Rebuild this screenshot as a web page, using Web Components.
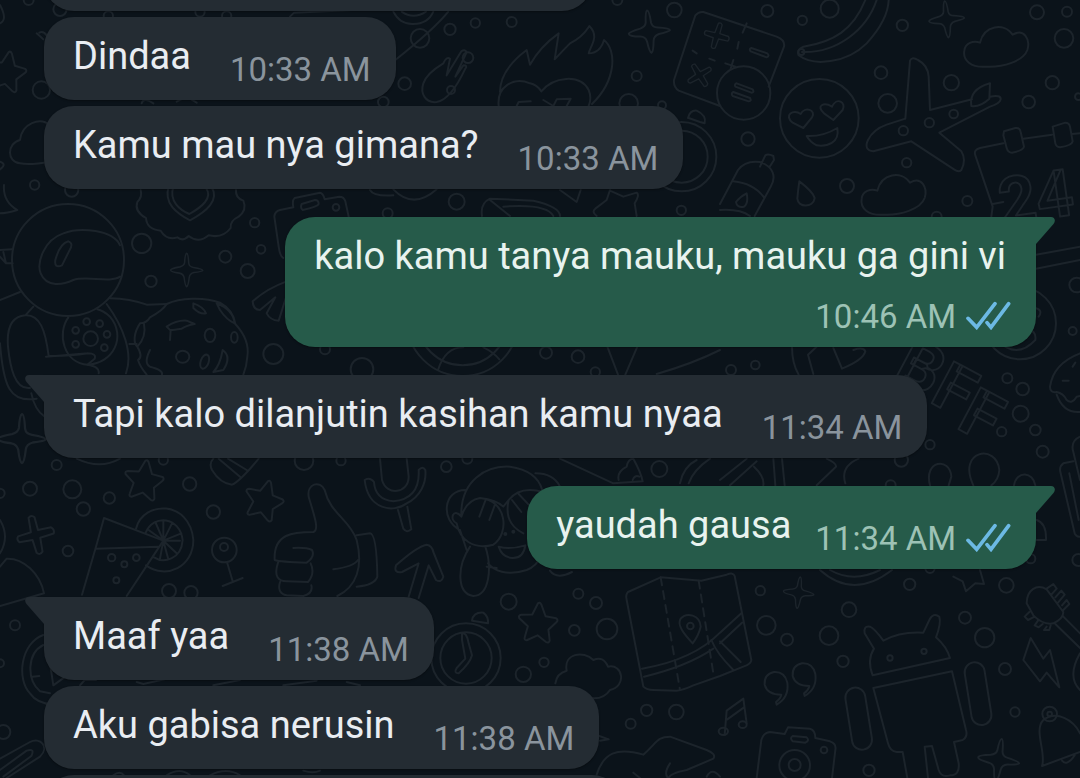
<!DOCTYPE html>
<html lang="id">
<head>
<meta charset="utf-8">
<meta name="viewport" content="width=device-width, initial-scale=1">
<title>Chat</title>
<style>
  html, body {
    margin: 0;
    height: 100%;
    overflow: hidden;
    background: #0b131a;
    font-family: Roboto, "Noto Sans", sans-serif;
  }
</style>
</head>
<body>

<chat-screen>
  <chat-wallpaper slot="wallpaper"></chat-wallpaper>
  <chat-bubble class="cut first"></chat-bubble>
  <chat-bubble time="10:33 AM">Dindaa</chat-bubble>
  <chat-bubble time="10:33 AM">Kamu mau nya gimana?</chat-bubble>
  <chat-bubble out tail stacked time="10:46 AM">kalo kamu tanya mauku, mauku ga gini vi</chat-bubble>
  <chat-bubble tail time="11:34 AM">Tapi kalo dilanjutin kasihan kamu nyaa</chat-bubble>
  <chat-bubble out tail time="11:34 AM">yaudah gausa</chat-bubble>
  <chat-bubble tail time="11:38 AM">Maaf yaa</chat-bubble>
  <chat-bubble time="11:38 AM">Aku gabisa nerusin</chat-bubble>
  <chat-bubble class="cut last"></chat-bubble>
</chat-screen>

<template id="screen-template">
  <style>
    :host {
      display: block;
      position: relative;
      height: 100vh;
      overflow: hidden;
    }
    main {
      position: relative;
      display: flex;
      flex-direction: column;
      gap: 6px;
      padding: 0 44px;
      /* scrolled so the oldest bubble is partly out of view */
      margin-top: -72px;
    }
    ::slotted(.cut) {
      min-height: 83px;
      flex-shrink: 0;
    }
    ::slotted(.first) { width: 548px; }
    ::slotted(.last) { width: 578px; }
  </style>
  <slot name="wallpaper"></slot>
  <main><slot></slot></main>
</template>

<template id="bubble-template">
  <style>
    :host {
      display: block;
      position: relative;
      box-sizing: border-box;
      align-self: flex-start;
      max-width: 100%;
      border-radius: 30px;
      background: var(--bubble);
      box-shadow: 0 1px 2px rgba(0, 0, 0, 0.35);
      --bubble: #242c33;
      --text: #e9edf2;
      --meta: #8a949d;
    }
    :host([out]) {
      align-self: flex-end;
      --bubble: #265b4a;
      --text: #e8f3ef;
      --meta: #9dc2b5;
    }
    :host([tail]) {
      margin-top: 22px;
      border-top-left-radius: 0;
    }
    :host([out][tail]) {
      border-top-left-radius: 30px;
      border-top-right-radius: 0;
    }
    .row {
      display: flex;
      align-items: flex-end;
      gap: 39px;
      padding: 16px 25px 10px 29px;
    }
    :host([out]) .row { gap: 24px; }
    :host([out][stacked]) .row {
      flex-direction: column;
      gap: 7px;
    }
    p {
      margin: 0 0 11px;
      color: var(--text);
      font-size: 38px;
      line-height: 46px;
    }
    :host([stacked]) p { padding-right: 5px; }
    .meta {
      display: flex;
      align-items: center;
      gap: 10px;
      color: var(--meta);
      font-size: 33px;
      line-height: 40px;
      white-space: nowrap;
    }
    .tail {
      position: absolute;
      top: 0;
      left: -19px;
      width: 20px;
      height: 28px;
      fill: var(--bubble);
      display: none;
    }
    :host([tail]) .tail { display: block; }
    :host([out]) .tail {
      left: auto;
      right: -19px;
      transform: scaleX(-1);
    }
    .ticks {
      display: none;
      width: 45px;
      height: 29px;
      margin-bottom: 4px;
      fill: none;
      stroke: #6cb9e4;
      stroke-width: 11;
      stroke-linecap: round;
      stroke-linejoin: miter;
    }
    :host([out]) .ticks { display: block; }
  </style>
  <svg class="tail" viewBox="0 0 20 28" aria-hidden="true"><path d="M20 0H4C0 0-1 4 1.500 7L19 27V28H20Z"/></svg>
  <div class="row">
    <p><slot></slot></p>
    <div class="meta">
      <time></time>
      <svg class="ticks" viewBox="740 3 135 87" aria-hidden="true">
        <path d="M746 55L772 82L827 11M803 68L815 82L868 11"/>
      </svg>
    </div>
  </div>
</template>

<template id="wallpaper-template">
  <style>
    :host {
      display: block;
      position: absolute;
      inset: 0;
    }
    svg {
      display: block;
      width: 100%;
      height: 100%;
      fill: none;
      stroke: #1c242b;
      stroke-width: 6;
      stroke-linecap: round;
      stroke-linejoin: round;
    }
    text {
      font-family: Roboto, sans-serif;
      font-weight: 700;
    }
  </style>
  <svg viewBox="0 0 3240 2334" preserveAspectRatio="xMinYMin slice" aria-hidden="true">
    <defs>
      <path id="star" d="M-2-58Q3-63 8-55L22-20L54-15Q62-10 55-3L32 20L37 53Q34 62 26 57L0 38L-32 54Q-41 54-38 44L-30 12L-57-12Q-60-20-51-22L-18-24Z"/>
      <path id="spark" d="M0-64Q6-64 8-26Q10-12 26-10Q62-4 62 2Q60 6 28 10Q12 14 10 28Q6 62 0 64Q-6 62-10 28Q-14 14-28 12Q-62 8-62 0Q-60-6-26-12Q-10-16-8-28Q-6-62 0-64Z"/>
      <path id="cloud" d="M-48-30C-36-82 24-92 50-54C84-74 104-40 94-8C82 26 20 44-28 42C-76 46-100 22-95-6C-93-28-68-38-48-30Z"/>
      <path id="plus" d="M-10-56Q0-64 8-54L10-14L50-14Q60-6 54 6L12 10L10 52Q0 62-8 52L-12 12L-52 10Q-60 0-52-8L-12-12Z"/>
    </defs>
    <g id="dots"></g>

    <!-- top left: star, cloud, heart badge, camera -->
    <use href="#star" transform="translate(20 214) rotate(8)"/>
    <path d="M0 15Q24 60 0 70M110 100L130 118M118 98Q130 92 140 106M0 485Q22 492 0 508"/>
    <path d="M150 376C120 350 66 370 60 420C20 430 20 486 60 490Q90 496 150 485"/>
    <path d="M12 555Q8 604 52 630Q20 640 0 640"/>
    <path d="M422 570Q428 590 412 606Q402 634 438 654Q440 688 482 692Q500 722 532 712Q548 726 566 708Q596 732 626 706Q668 716 692 684Q690 662 716 650Q742 630 730 602Q706 594 708 570"/>
    <path d="M506 560C490 610 530 640 570 661C620 634 660 600 634 560M520 560C506 604 540 630 568 642C604 622 640 594 618 564"/>
    <path d="M850 774Q840 770 836 740L823 650Q824 634 840 630L880 622Q876 600 884 594L960 578Q970 580 974 598L1018 590Q1032 590 1036 604L1046 650M905 612L945 600Q956 600 956 612Q954 620 908 630Q900 624 905 612Z"/>
    <path d="M870 50L882 38L1060 30M425 310Q430 290 460 310M530 305L560 290L590 308"/>

    <!-- astronaut with cookie -->
    <circle cx="204" cy="780" r="168"/>
    <path d="M360 736C340 690 240 680 190 700C130 720 110 790 122 820C140 864 190 854 220 840C260 826 330 850 360 830M166 780Q180 730 205 724Q222 730 208 752L186 796Q162 806 166 780Z"/>
    <path d="M0 750L36 748M0 770L18 790L38 790M10 756L18 790M0 900L60 876M100 920L76 946C30 950 20 990 24 1040C30 1100 44 1170 90 1164M76 946C120 944 136 990 146 1068Q200 1070 264 1060M0 1030C10 1160 30 1210 110 1196M138 1070L264 1060Q290 1060 284 1076L262 1094Q300 1100 296 1120M320 912C370 980 400 1060 378 1120M330 895Q390 896 440 914L500 912M94 1180Q104 1230 134 1250"/>
    <path d="M205 952C170 1000 190 1090 264 1094C340 1090 380 1010 330 950Q310 932 292 928"/>
    <circle cx="272" cy="1016" r="22"/>

    <!-- spotted ball -->
    <path d="M500 912C540 894 610 890 660 908Q700 930 706 972Q750 1020 742 1070Q740 1100 730 1124M500 912Q490 930 450 952Q440 970 420 970C400 1000 400 1030 412 1040Q430 1070 414 1080Q420 1100 440 1124M388 1032L410 1032M450 1050Q430 1090 450 1100Q490 1110 486 1124M580 910Q610 920 618 940Q600 944 580 924ZM650 910Q700 930 704 970Q680 960 660 930ZM500 980Q530 960 560 962L584 972Q560 976 545 986Q520 990 512 990L510 1020M500 980L512 992M668 1050Q696 1070 670 1110L640 1116Q660 1096 668 1050ZM412 1040Q440 1010 432 972"/>
    <ellipse cx="630" cy="1006" rx="16" ry="20"/><ellipse cx="703" cy="1012" rx="10" ry="16"/>
    <ellipse cx="548" cy="1070" rx="20" ry="18"/><ellipse cx="614" cy="1085" rx="12" ry="22" transform="rotate(20 614 1085)"/>
    <path d="M860 844Q800 866 758 904Q760 930 780 930L826 892L800 940Q810 960 836 962L862 880"/>
    <use href="#spark" transform="translate(560 810) scale(.78)"/>
    <use href="#spark" transform="translate(66 1316) scale(1.150)"/>

    <!-- flaming heart, glove, ring -->
    <path d="M1180 35Q1200 74 1240 72Q1284 72 1300 35M1205 35Q1240 60 1278 35M1345 35Q1300 90 1186 180"/>
    <path d="M1270 250C1260 280 1276 310 1310 306C1350 300 1380 240 1396 206Q1404 196 1390 196L1366 230L1400 156Q1394 146 1384 154L1340 226L1350 176Q1340 168 1330 190Q1280 220 1270 250Z"/>
    <path d="M1496 318C1490 260 1540 230 1590 250Q1610 254 1624 274C1660 230 1740 220 1766 270Q1776 294 1766 318M1500 276C1500 220 1540 180 1580 150L1590 194Q1620 140 1676 100L1664 178Q1690 150 1710 130C1750 110 1760 90 1768 78C1800 110 1770 140 1766 160Q1800 160 1812 120C1850 150 1850 240 1776 312M1550 318L1556 306L1592 304M1630 300L1660 318L1670 298L1712 296L1700 318"/>
    <use href="#spark" transform="translate(1948 95) rotate(-6)"/>

    <!-- calculator card -->
    <path d="M2110 36L2330 110Q2356 120 2352 140L2306 260M2110 36Q2096 34 2086 46L2022 240Q2020 262 2036 272L2160 318M2240 70L2228 98M2216 126L2212 146M2200 180L2192 206M2176 190L2206 200M2078 152L2090 160M2128 176L2144 182"/>
    <circle cx="2231" cy="279" r="80"/>
    <use href="#plus" transform="translate(2150 108) rotate(18) scale(.68)"/>
    <use href="#plus" transform="translate(2098 226) rotate(60) scale(.68)"/>
    <path d="M2254 144L2302 160Q2310 168 2300 172L2252 154Q2246 146 2254 144ZM2210 250L2258 268Q2264 278 2254 278L2206 260Q2202 252 2210 250ZM2200 276L2250 294Q2256 304 2246 304L2198 288Q2192 280 2200 276Z"/>
    <path d="M2064 354Q2070 330 2090 332Q2120 346 2114 370L2100 366L2066 354"/>
    <circle cx="2045" cy="470" r="104"/><circle cx="2045" cy="470" r="78"/>

    <!-- banana, heart eyes, plane, clouds -->
    <path d="M2596 0C2560 90 2500 126 2410 140Q2388 150 2396 166C2440 200 2540 190 2600 130Q2664 60 2666 0M2630 0C2600 90 2510 160 2406 156"/>
    <circle cx="2404" cy="156" r="9"/>
    <circle cx="2458" cy="355" r="118"/>
    <path d="M2410 384L2378 368C2350 346 2380 326 2402 342C2414 318 2450 330 2436 352ZM2500 360L2472 340C2446 316 2472 306 2496 320C2510 290 2540 306 2528 330ZM2420 408Q2470 410 2512 384C2520 430 2480 440 2450 436Q2430 426 2420 408Z"/>
    <path d="M2716 356L2730 182Q2736 168 2754 180Q2784 196 2786 230L2790 330L2916 298M2970 290Q3004 284 3002 298Q3000 310 2970 320L2818 398L2884 454Q2900 480 2884 510Q2876 518 2862 508L2734 424L2620 454Q2590 450 2604 420Q2620 388 2660 374L2716 356M2914 318Q2906 268 2970 250L2968 296Q2940 322 2914 318Z"/>
    <use href="#spark" transform="translate(2840 58) scale(.86) rotate(-6)"/>
    <use href="#cloud" transform="translate(2988 158)"/>
    <use href="#cloud" transform="translate(2680 602)"/>
    <path d="M2280 500L2296 466Q2304 460 2320 468L2322 480L2308 502M2160 612L2214 510Q2236 480 2280 486C2320 500 2330 530 2312 560L2264 648M2200 544Q2260 550 2292 592M2160 630Q2220 626 2250 648M2208 606Q2220 590 2240 580Q2246 610 2232 620Q2210 624 2208 606ZM2398 544Q2440 576 2444 594C2440 624 2394 624 2392 596Q2394 570 2398 544Z"/>

    <!-- calendar -->
    <path d="M3010 430L2940 444Q2920 450 2926 466L2978 620L2974 650M3070 416L3156 404M3216 402L3240 400M2978 612L3010 606M3012 394L3046 384Q3060 382 3062 396L3072 440Q3070 452 3036 458Q3024 458 3020 444L3010 406ZM3158 380L3196 368Q3208 368 3210 380L3218 424Q3216 436 3180 442Q3168 440 3166 430ZM3108 764L3240 740M3108 806L3240 780"/>
    <text x="3006" y="674" font-size="196" transform="rotate(-8 3006 674)">24</text>
    <path d="M1110 570Q1120 590 1180 586M1180 568Q1240 630 1310 568M1680 570L1730 606L1742 570M1830 570L1820 600L1786 626Q1774 636 1790 648M1830 572L1870 590L1910 578Q1920 584 1904 610L1910 648M1446 648Q1440 610 1470 596L1600 602Q1680 620 1680 648M1470 600L1530 648M1510 620Q1640 610 1660 648"/>

    <!-- strip under the first outgoing bubble -->
    <circle cx="1388" cy="960" r="168"/><circle cx="1388" cy="960" r="136"/>
    <path d="M1314 1110C1330 1060 1360 1042 1390 1042M1450 1042Q1480 1056 1498 1078M1822 1040L1854 1124M1912 1040L1876 1124M1970 1122Q2080 1090 2160 1050"/>
    <path d="M2376 1040Q2376 1090 2396 1124M2450 1040L2424 1064L2440 1122M2500 1044L2526 1106Q2590 1080 2596 1054Q2590 1040 2560 1050"/>
    <circle cx="3060" cy="970" r="108"/><path d="M2990 1020Q3050 1080 3106 1020Q3110 990 3080 990M3106 924Q3130 930 3116 950"/>
    <text x="2675 2784 2864" y="1130 1204 1282" rotate="28" font-size="200">BFF</text>

    <!-- cupcake and clip at the right edge -->
    <path d="M3240 1060Q3160 1090 3150 1160Q3150 1180 3170 1176Q3190 1180 3200 1200Q3216 1214 3230 1190L3240 1188M3170 1184Q3190 1240 3240 1236M3218 1100L3226 1088M3188 1142L3206 1142M3240 1310Q3210 1324 3220 1356L3240 1440M3220 1384L3190 1390Q3176 1400 3182 1420L3224 1600Q3230 1612 3240 1610M3208 1420L3236 1560"/>

    <!-- lower left: stars, drink, lollipop, thumb -->
    <path d="M230 1376Q300 1410 360 1376"/>
    <use href="#star" transform="translate(432 1440) rotate(6)"/>
    <use href="#star" transform="translate(792 1500) rotate(14)"/>
    <use href="#plus" transform="translate(107 1606) rotate(-12)"/>
    <path d="M640 1376Q626 1390 636 1410Q660 1450 696 1454Q720 1444 776 1376M656 1376L720 1430M684 1376L740 1410"/>
    <path d="M246 1784L288 1640L312 1554L490 1622L380 1788M288 1646L474 1640"/>
    <path d="M408 1586C430 1500 570 1500 580 1620C580 1700 500 1740 438 1696M436 1600C460 1540 540 1550 548 1620C544 1680 490 1690 462 1672M490 1622L490 1564M490 1622L516 1570M490 1622L544 1600M490 1622L540 1622M490 1622L530 1660M490 1622L504 1674M490 1622L480 1676M490 1622L446 1590M490 1622L466 1566"/>
    <circle cx="673" cy="1650" r="37"/><circle cx="672" cy="1641" r="12"/>
    <path d="M682 1690L698 1744M668 1758L728 1734M0 1560Q30 1610 0 1660M0 1700L20 1676C70 1674 120 1720 132 1780L0 1818"/>
    <path d="M926 1490C920 1450 960 1440 974 1470C990 1540 1050 1560 1070 1620C1090 1700 1070 1760 1012 1788M926 1490C940 1540 960 1590 940 1596C880 1596 820 1600 824 1680Q840 1686 920 1688Q946 1670 936 1650Q920 1642 880 1644M834 1688C820 1730 836 1744 860 1744L924 1746Q946 1720 932 1690M840 1746Q830 1780 860 1786L910 1788Q940 1780 934 1756M1000 1708Q1060 1700 1074 1680M1070 1606L1110 1600Q1130 1602 1132 1730Q1124 1756 1070 1760"/>
    <path d="M130 1905C60 1930 50 2040 90 2080Q110 2110 160 2114M130 1935C80 1960 80 2040 120 2074L150 2080M150 1990L160 2056L196 2030M98 2030L118 2028M240 2056L254 2040L288 2040M410 2046L430 2052L500 2036M640 2056L720 2040M850 2056L950 2042M1040 2046L1080 2056"/>
    <path d="M0 2276L90 2226C120 2210 150 2240 120 2270L20 2334M0 2310L80 2252Q106 2244 94 2268L10 2330M340 2326Q360 2310 372 2326M500 2326Q540 2300 570 2326M630 2326Q680 2300 720 2326M910 2312Q940 2322 960 2312"/>

    <!-- microphone, arrow, covered face, watch -->
    <path d="M1140 1376L1146 1440C1160 1490 1226 1480 1226 1430L1220 1376M1094 1440C1104 1530 1180 1540 1220 1510C1260 1490 1280 1450 1276 1410Q1268 1396 1256 1410C1260 1480 1220 1500 1180 1504C1140 1500 1124 1480 1122 1446Q1110 1430 1094 1440ZM1194 1530L1210 1586Q1220 1600 1234 1588L1222 1520"/>
    <path d="M1226 1790L1256 1690L1206 1716Q1180 1720 1188 1696Q1250 1640 1280 1634Q1296 1636 1300 1656L1330 1730Q1324 1750 1308 1740L1286 1696L1256 1794"/>
    <path d="M1384 1550C1380 1440 1460 1396 1530 1400Q1610 1412 1626 1468C1670 1500 1660 1680 1580 1710C1520 1730 1480 1710 1464 1690M1396 1470C1330 1470 1320 1560 1380 1590L1400 1650M1606 1420Q1660 1420 1680 1460M1384 1550Q1400 1500 1440 1494Q1490 1500 1510 1520L1526 1500Q1560 1456 1630 1476M1440 1494C1520 1500 1530 1600 1480 1634C1420 1650 1380 1620 1370 1570C1346 1560 1360 1520 1384 1550M1526 1500Q1510 1570 1570 1600M1438 1550L1456 1502M1468 1560L1484 1516M1536 1500L1564 1536M1556 1482L1586 1514M1410 1640C1370 1700 1370 1780 1420 1788C1470 1786 1476 1700 1456 1640M1496 1640Q1530 1650 1576 1636Q1570 1676 1536 1674Q1506 1672 1496 1640ZM1460 1700L1490 1704M1650 1712Q1670 1740 1716 1716"/>
    <use href="#star" transform="translate(1614 1868) rotate(2)"/>
    <circle cx="1398" cy="1974" r="104"/><circle cx="1398" cy="1974" r="77"/>
    <path d="M1416 1862Q1420 1836 1450 1838Q1466 1850 1464 1870ZM1386 1900Q1400 1896 1406 1930L1416 1966Q1410 1990 1376 2020Q1360 2020 1370 2004L1396 1976L1386 1920Z"/>
    <path d="M1666 2050Q1670 2020 1700 2012C1690 1960 1750 1950 1780 1980Q1810 1966 1824 2000C1870 1990 1880 2060 1830 2070Q1810 2100 1770 2094M1680 1376L1840 1450L1928 1444Q1924 1420 1900 1376M1856 1440Q1850 1416 1880 1400Q1884 1376 1900 1376M1898 1440Q1904 1424 1918 1430M2040 1450Q2050 1400 2090 1380M2066 1450Q2080 1410 2130 1376"/>

    <!-- map -->
    <path d="M1982 1732L1884 1776Q1876 1784 1880 1800L1930 2060Q1940 2070 1960 2070L2030 2072Q2050 2070 2080 2056L2160 2028L2230 2000Q2254 1992 2254 1980L2204 1728Q2200 1716 2180 1724L2104 1742ZM1926 2006Q2080 1980 2160 1898L2224 1840M1932 2030Q2060 2000 2140 1946M2134 1920Q2150 1960 2200 2010M2160 1924L2222 1986M2160 1930L2226 1868"/>
    <path d="M1982 1732L2040 2070M2096 1742L2140 2020" stroke-dasharray="24 18"/>
    <path d="M2078 1930C2050 1900 2030 1874 2042 1856C2060 1836 2100 1844 2102 1880Q2096 1906 2078 1930Z"/><circle cx="2071" cy="1878" r="10"/>
    <path d="M1790 2324C1810 2260 1850 2240 1930 2264C1970 2230 1970 2210 2010 2210L2120 2250Q2150 2262 2140 2276L2060 2310Q2010 2320 2006 2334M1900 2318L1920 2334M2010 2290Q1990 2320 2004 2334M1798 2208L1826 2218L1800 2222M2120 2330Q2136 2300 2160 2330"/>

    <!-- quotes, note, camera -->
    <path id="quote" d="M2330 2114Q2368 2092 2362 2048Q2354 2014 2322 2016Q2292 2022 2294 2054Q2302 2084 2344 2084Q2342 2096 2328 2106Z"/>
    <use href="#quote" transform="translate(84 -26)"/>
    <path d="M2174 2204L2180 2132L2230 2096L2240 2170M2182 2158L2232 2122"/>
    <ellipse cx="2170" cy="2194" rx="14" ry="11"/><ellipse cx="2228" cy="2174" rx="12" ry="10"/>
    <path d="M2270 2334L2284 2220Q2290 2198 2310 2196L2354 2202L2364 2182L2430 2186Q2446 2190 2446 2214L2490 2224Q2510 2230 2506 2250L2496 2334M2378 2208L2420 2212Q2430 2222 2416 2228L2378 2224Q2368 2214 2378 2208Z"/>
    <circle cx="2384" cy="2296" r="46"/><circle cx="2384" cy="2295" r="18"/>

    <!-- robot -->
    <path d="M2618 2026Q2600 1980 2622 1946L2594 1900Q2590 1876 2610 1880Q2624 1886 2650 1922Q2700 1894 2770 1898L2788 1860Q2800 1836 2818 1850Q2824 1870 2808 1912Q2840 1940 2850 1974Z"/>
    <path d="M2620 2064L2856 2014L2898 2190Q2904 2210 2888 2220L2862 2226L2876 2290Q2880 2326 2850 2326Q2824 2334 2816 2310L2796 2238L2774 2240L2784 2334M2620 2064L2664 2230Q2670 2254 2690 2256L2708 2256L2722 2334"/>
    <rect x="2546" y="2062" width="60" height="188" rx="30" transform="rotate(-9 2576 2156)"/>
    <rect x="2904" y="1986" width="60" height="190" rx="30" transform="rotate(-9 2934 2080)"/>
    <use href="#spark" transform="translate(2396 1778) scale(.74) rotate(6)"/>
    <use href="#spark" transform="translate(2996 2280) rotate(8)"/>

    <!-- right edge: guitar, bolt, bell, balloons -->
    <path d="M3080 1810C3080 1770 3110 1750 3140 1768L3190 1836Q3190 1856 3160 1870Q3130 1876 3100 1846ZM3190 1850L3240 1900M3166 1872L3240 1944M3240 1960Q3200 2030 3240 2070M3140 1766L3160 1752L3170 1766L3154 1784M3166 1792L3184 1772L3194 1784L3174 1808M3186 1816L3200 1800L3208 1812L3190 1830M3088 1836L3074 1850L3084 1860L3104 1850M3114 1862L3104 1876L3116 1882L3128 1872M3140 1880L3132 1890L3148 1890L3152 1876"/>
    <path d="M3092 1914L3070 1980L3120 2044L3140 2018L3178 2062L3150 1950L3130 1976ZM3126 2298C3140 2260 3100 2190 3130 2160C3170 2130 3220 2160 3240 2200M3126 2298L3240 2256M3186 2282Q3200 2300 3224 2266"/>
    <circle cx="3149" cy="2142" r="22"/><circle cx="3149" cy="2142" r="7"/>
    <path d="M2790 1456C2770 1380 2850 1370 2854 1430L2846 1456M2920 1456C2870 1350 2990 1330 2998 1410Q2996 1440 2974 1456M3042 1456C3050 1410 3100 1416 3106 1456M3110 1560Q3140 1570 3138 1620L3110 1620M2460 1710Q2560 1800 2676 1710M2490 1710Q2560 1750 2640 1710M2860 1730L2888 1744L2898 1774L2926 1750L2952 1752L2940 1710M2160 1440L2240 1376M2190 1456L2270 1384M2262 1400Q2294 1430 2290 1456M2320 1376L2326 1456M2346 1376L2354 1456M2450 1456L2508 1400Q2510 1390 2480 1376M2536 1450Q2520 1400 2576 1376"/>
  </svg>
</template>

<script>
  // x, y, radius of the small rings scattered between the doodles
  const DOTS = [
    [86, 0, 15], [180, 28, 20], [124, 270, 26], [104, 555, 14], [215, 570, 20], [425, 730, 29], [764, 668, 14], [783, 748, 13],
    [676, 770, 18], [743, 813, 21], [453, 844, 17], [325, 48, 14], [680, 48, 14], [600, 36, 14], [1008, 622, 10],
    [820, 1062, 30], [975, 1048, 15], [260, 965, 10], [299, 971, 10], [321, 1003, 10], [313, 1043, 10], [227, 1033, 10], [227, 991, 10],
    [1260, 115, 28], [1350, 88, 17], [1426, 69, 14], [1535, 66, 15], [1404, 173, 16], [1214, 251, 19], [1353, 270, 12], [1150, 306, 16],
    [2023, 30, 22], [1910, 228, 15], [1886, 310, 28], [1986, 316, 12], [1852, 0, 15], [1370, 605, 24], [1163, 640, 15], [2044, 631, 14],
    [2302, 33, 18], [2407, 61, 14], [2489, 26, 27], [2707, 76, 17], [2643, 218, 19], [2663, 310, 28], [2854, 248, 23], [2788, 368, 14],
    [2861, 342, 13], [2710, 392, 14], [2244, 417, 20], [2720, 488, 14], [2541, 558, 21], [2902, 603, 15], [2810, 650, 15], [3111, 37, 21],
    [3201, 35, 15], [3192, 115, 28], [3157, 248, 20], [3086, 306, 19], [3235, 290, 10],
    [1086, 1108, 34], [1638, 1058, 18], [1734, 1070, 19], [1786, 1116, 14], [2193, 1110, 15], [2266, 1095, 13],
    [3022, 1135, 15], [3068, 1167, 19], [3062, 1241, 24], [3005, 1295, 14], [3106, 1290, 16], [3128, 1355, 18], [2790, 1334, 14],
    [3218, 993, 12], [3230, 855, 22], [2704, 1380, 20], [2672, 1456, 15],
    [170, 1395, 15], [90, 1466, 21], [217, 1468, 27], [250, 1527, 20], [328, 1494, 17], [0, 1480, 14], [204, 1653, 16], [335, 1673, 11],
    [409, 1673, 10], [373, 1693, 9], [349, 1741, 9], [507, 1773, 21], [573, 1778, 20], [569, 1452, 20], [640, 1536, 20], [912, 1382, 28],
    [1023, 1382, 14], [490, 1380, 14], [45, 1876, 15], [0, 1990, 12], [10, 2196, 21],
    [1339, 1400, 16], [1402, 1376, 15], [1978, 1407, 24], [1526, 1805, 24], [1735, 1781, 15], [1788, 1809, 18], [1821, 1887, 31],
    [1723, 1891, 16], [1632, 1987, 14], [1570, 2023, 23], [1940, 2131, 17], [2029, 2136, 22], [1892, 2171, 15], [1516, 1602, 3], [1540, 1595, 3],
    [2281, 1772, 14], [2299, 1876, 28], [2361, 1919, 18], [2547, 1829, 22], [2487, 1907, 28], [2529, 1984, 17], [2729, 1753, 17],
    [2895, 1853, 18], [2954, 1913, 29], [3015, 2007, 18], [3019, 1756, 22], [3235, 1680, 18], [3045, 2136, 14], [2607, 2311, 17],
    [2472, 2250, 10], [2670, 1974, 8], [2772, 1954, 8], [3092, 1676, 14], [2790, 1705, 14]
  ];

  function attach(element, id) {
    const template = document.getElementById(id);
    element.attachShadow({ mode: 'open' }).appendChild(template.content.cloneNode(true));
  }

  class ChatScreen extends HTMLElement {
    constructor() {
      super();
      attach(this, 'screen-template');
    }
  }

  class ChatWallpaper extends HTMLElement {
    constructor() {
      super();
      attach(this, 'wallpaper-template');
      this.shadowRoot.getElementById('dots').innerHTML =
        DOTS.map(([x, y, r]) => `<circle cx="${x}" cy="${y}" r="${r}"/>`).join('');
    }
  }

  class ChatBubble extends HTMLElement {
    constructor() {
      super();
      attach(this, 'bubble-template');
    }

    connectedCallback() {
      const time = this.getAttribute('time');
      if (time) {
        this.shadowRoot.querySelector('time').textContent = time;
      } else {
        this.shadowRoot.querySelector('.row').remove();
      }
    }
  }

  customElements.define('chat-screen', ChatScreen);
  customElements.define('chat-wallpaper', ChatWallpaper);
  customElements.define('chat-bubble', ChatBubble);
</script>
</body>
</html>
